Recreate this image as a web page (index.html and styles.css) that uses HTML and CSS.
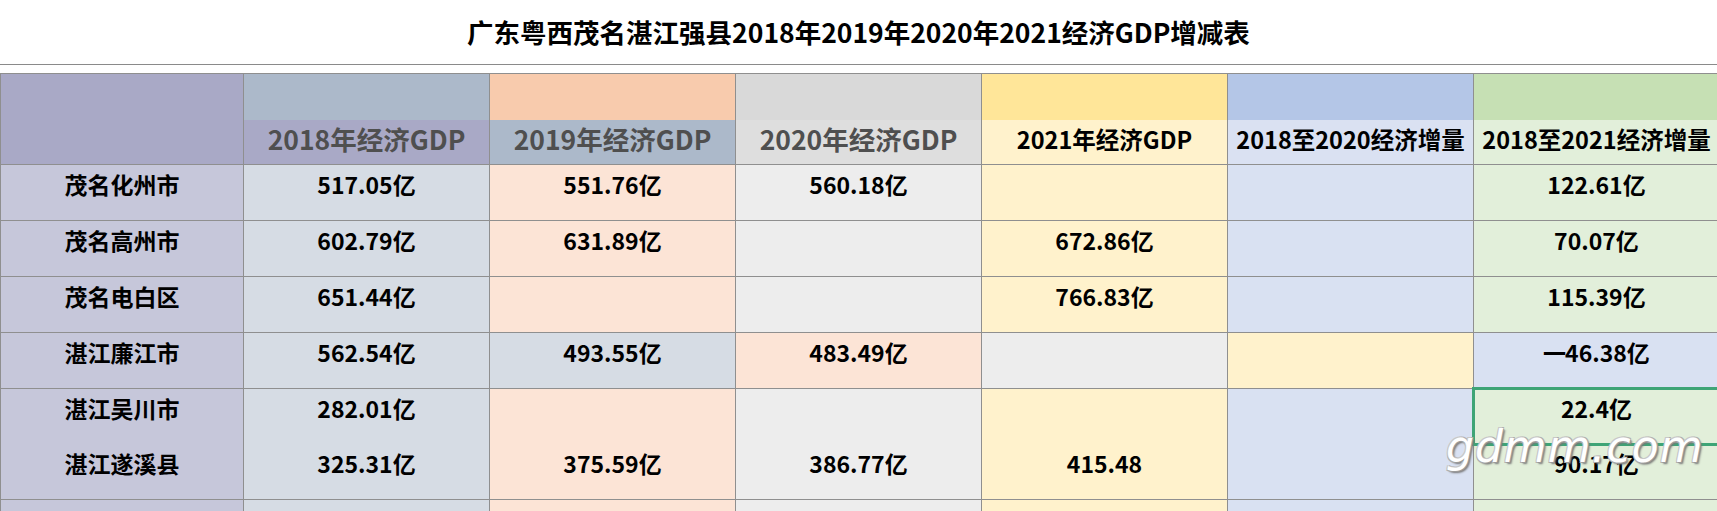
FILE: index.html
```html
<!DOCTYPE html>
<html lang="zh-CN">
<head>
<meta charset="utf-8">
<title>广东粤西茂名湛江强县GDP增减表</title>
<link rel="stylesheet" href="styles.css">
</head>
<body>
<div class="page">
  <h1 class="title">广东粤西茂名湛江强县2018年2019年2020年2021经济GDP增减表</h1>
  <div class="rule"></div>
  <table class="sheet">
    <colgroup>
      <col class="c-name"><col class="c-num"><col class="c-num"><col class="c-num"><col class="c-num"><col class="c-num"><col class="c-num">
    </colgroup>
    <thead>
      <tr class="band-top">
        <th class="h-name" rowspan="2"></th>
        <th class="bt-slate"></th>
        <th class="bt-peach"></th>
        <th class="bt-gray"></th>
        <th class="bt-gold"></th>
        <th class="bt-blue"></th>
        <th class="bt-green"></th>
      </tr>
      <tr class="band-bottom">
        <th class="bb-purple dim">2018年经济GDP</th>
        <th class="bb-slate dim">2019年经济GDP</th>
        <th class="bb-gray dim">2020年经济GDP</th>
        <th class="bb-gold">2021年经济GDP</th>
        <th class="bb-blue">2018至2020经济增量</th>
        <th class="bb-green">2018至2021经济增量</th>
      </tr>
    </thead>
    <tbody>
      <tr>
        <td class="name">茂名化州市</td>
        <td class="slate">517.05亿</td>
        <td class="peach">551.76亿</td>
        <td class="gray">560.18亿</td>
        <td class="gold"></td>
        <td class="blue"></td>
        <td class="green">122.61亿</td>
      </tr>
      <tr>
        <td class="name">茂名高州市</td>
        <td class="slate">602.79亿</td>
        <td class="peach">631.89亿</td>
        <td class="gray"></td>
        <td class="gold">672.86亿</td>
        <td class="blue"></td>
        <td class="green">70.07亿</td>
      </tr>
      <tr>
        <td class="name">茂名电白区</td>
        <td class="slate">651.44亿</td>
        <td class="peach"></td>
        <td class="gray"></td>
        <td class="gold">766.83亿</td>
        <td class="blue"></td>
        <td class="green">115.39亿</td>
      </tr>
      <tr>
        <td class="name">湛江廉江市</td>
        <td class="slate">562.54亿</td>
        <td class="slate">493.55亿</td>
        <td class="peach">483.49亿</td>
        <td class="gray"></td>
        <td class="gold"></td>
        <td class="blue"><span class="minus">一</span>46.38亿</td>
      </tr>
      <tr class="split-top">
        <td class="name">湛江吴川市</td>
        <td class="slate">282.01亿</td>
        <td class="peach"></td>
        <td class="gray"></td>
        <td class="gold"></td>
        <td class="blue"></td>
        <td class="green selected">22.4亿</td>
      </tr>
      <tr class="split-bottom">
        <td class="name">湛江遂溪县</td>
        <td class="slate">325.31亿</td>
        <td class="peach">375.59亿</td>
        <td class="gray">386.77亿</td>
        <td class="gold">415.48</td>
        <td class="blue"></td>
        <td class="green">90.17亿</td>
      </tr>
      <tr>
        <td class="name"></td>
        <td class="slate"></td>
        <td class="peach"></td>
        <td class="gray"></td>
        <td class="gold"></td>
        <td class="blue"></td>
        <td class="green"></td>
      </tr>
    </tbody>
  </table>
  <div class="watermark">gdmm.com</div>
</div>
</body>
</html>
```
FILE: styles.css
```css
html, body {
  margin: 0;
  padding: 0;
  background: #ffffff;
  overflow: hidden;
}

.page {
  position: relative;
  width: 1717px;
  height: 511px;
  overflow: hidden;
  font-family: "Noto Sans CJK SC", "Noto Sans", sans-serif;
  color: #000;
}

.title {
  margin: 0;
  height: 64px;
  line-height: 63px;
  text-align: center;
  font-size: 26.5px;
  font-weight: 700;
  letter-spacing: 0;
}

.rule {
  height: 1px;
  background: #8a8a8a;
  margin-bottom: 8px;
}

.sheet {
  border-collapse: collapse;
  table-layout: fixed;
  width: 1719px;
}

.c-name { width: 243px; }
.c-num { width: 246px; }

.sheet th,
.sheet td {
  padding: 0;
  border: 1px solid #8f8f8f;
  text-align: center;
  vertical-align: top;
  font-weight: 700;
  line-height: 38px;
  white-space: nowrap;
  overflow: hidden;
}

.sheet td {
  font-size: 23px;
  height: 55px;
}

.band-top th {
  height: 46px;
  border-bottom: none;
  border-top: 1px solid #8f8f8f;
}

.band-bottom th {
  height: 44px;
  border-top: none;
  font-size: 23.5px;
  color: #000;
}

.band-bottom th.dim {
  font-size: 26.5px;
  color: #4f4f4f;
}

.h-name { background: #a9a9c6; }

.bt-slate { background: #acb9ca; }
.bt-peach { background: #f8cbad; }
.bt-gray { background: #d9d9d9; }
.bt-gold { background: #ffe699; }
.bt-blue { background: #b4c6e7; }
.bt-green { background: #c6e0b4; }

.bb-purple { background: #a9a9c6; }
.bb-slate { background: #acb9ca; }
.bb-gray { background: #dedede; }
.bb-gold { background: #fff2cc; }
.bb-blue { background: #dae1f2; }
.bb-green { background: #e2efda; }

.name { background: #c6c7da; }
.slate { background: #d6dce4; }
.peach { background: #fce4d6; }
.gray { background: #ededed; }
.gold { background: #fff2cc; }
.blue { background: #d9e1f2; }
.green { background: #e2efda; }

.minus {
  display: inline-block;
  margin-right: -1px;
}

.split-top td { border-bottom: none; }
.split-bottom td { border-top: none; }

.sheet td.selected {
  position: relative;
  overflow: visible;
}

.sheet td.selected::after {
  content: "";
  position: absolute;
  left: -2px;
  top: -2px;
  right: -4px;
  bottom: -2px;
  border: 3px solid #3ea476;
  pointer-events: none;
}

.watermark {
  position: absolute;
  left: 1446px;
  top: 421px;
  font-family: "DejaVu Sans", sans-serif;
  font-size: 44px;
  font-weight: 200;
  font-style: italic;
  color: #ffffff;
  letter-spacing: 1px;
  text-shadow: 1px 1px 0 #9a9a9a, -1px -1px 0 #c8c8c8, 1px -1px 0 #b0b0b0, -1px 1px 0 #b0b0b0, 2px 2px 2px #777;
}
```
